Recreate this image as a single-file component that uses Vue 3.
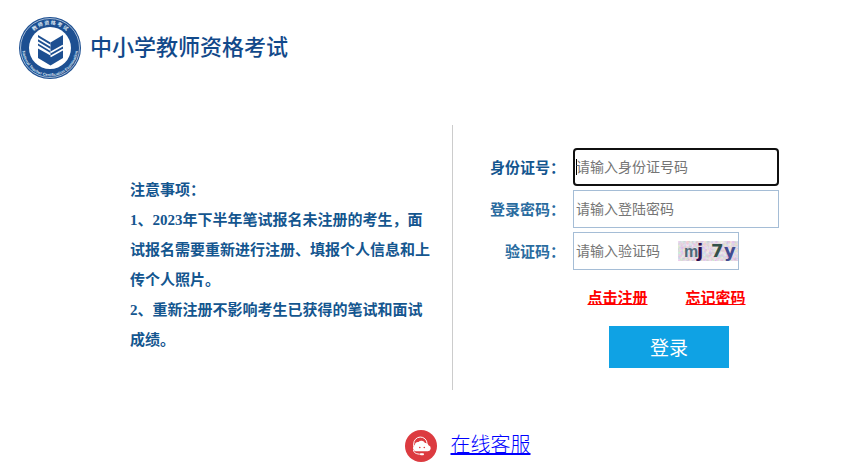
<template>
  <div class="page">
    <header class="header">
      <svg class="header__logo" viewBox="0 0 64 64" role="img" aria-label="教师资格考试">
        <defs>
          <path id="ring-top" d="M8.500 32a23.500 23.500 0 0 1 47 0" />
          <path id="ring-bottom" d="M4.600 27a27.900 27.900 0 1 0 54.800 0" />
        </defs>
        <circle cx="32" cy="32" r="31" fill="#1d4f91" />
        <circle cx="32" cy="32" r="29.500" fill="none" stroke="#dbe5f1" stroke-width="0.700" />
        <circle cx="32" cy="32" r="21" fill="#fff" />
        <text class="header__ring-cn"><textPath href="#ring-top" startOffset="50%" text-anchor="middle">教 师 资 格 考 试</textPath></text>
        <text class="header__ring-en"><textPath href="#ring-bottom" startOffset="50%" text-anchor="middle">National Teacher Certification Examination</textPath></text>
        <g fill="#1d4f91">
          <path d="M20 32.500l12.500 7L45 32.500V42L32.500 49.500 20 42z" />
          <path d="M20 19l12.500 7.500v2.200L20 21.200z" />
          <path d="M20 23.200l12.500 7.500v2.200L20 25.400z" />
          <path d="M20 27.400l12.500 7.500v2.200L20 29.600z" />
          <path d="M45 19v14L32.500 40V26.500z" />
        </g>
        <path d="M32.500 36.500l12.500-7M32.500 40.500l12.500-7" stroke="#fff" stroke-width="1.500" />
      </svg>
      <h1 class="header__title">中小学教师资格考试</h1>
    </header>

    <main class="main">
      <section class="notice">
        <p>注意事项：</p>
        <p v-for="(item, i) in notices" :key="i">{{ i + 1 }}、{{ item }}</p>
      </section>

      <form class="login" @submit.prevent>
        <div class="login__fields">
          <label class="login__label" for="idcard">身份证号：</label>
          <input id="idcard" ref="idInput" v-model="form.id" class="login__input" type="text" placeholder="请输入身份证号码">

          <label class="login__label login__label--soft" for="password">登录密码：</label>
          <input id="password" v-model="form.password" class="login__input" type="password" placeholder="请输入登陆密码">

          <label class="login__label login__label--soft" for="code">验证码：</label>
          <div class="login__code">
            <input id="code" v-model="form.code" class="login__code-input" type="text" placeholder="请输入验证码">
            <svg class="login__captcha" viewBox="0 0 60 20" role="img" aria-label="验证码图片">
              <filter id="grain" x="0" y="0" width="100%" height="100%">
                <feTurbulence type="fractalNoise" baseFrequency="0.35" numOctaves="2" seed="4" />
                <feColorMatrix values="0.6 0 0 0 0.46  0 0.6 0 0 0.38  0 0 0.5 0 0.5  0 0 0 0 1" />
              </filter>
              <rect width="60" height="20" filter="url(#grain)" />
              <g class="login__glyphs">
                <text x="6" y="16" class="login__glyph-wide" fill="#4d6878">m</text>
                <text x="19" y="16" fill="#301050">j</text>
                <text x="33" y="16" fill="#345048">7</text>
                <text x="46" y="16" fill="#424c90">y</text>
              </g>
            </svg>
          </div>
        </div>

        <div class="login__links">
          <a href="#register">点击注册</a>
          <a href="#forgot">忘记密码</a>
        </div>
        <button class="login__submit" type="submit">登录</button>
      </form>
    </main>

    <footer class="service">
      <svg class="service__icon" viewBox="0 0 32 32" aria-hidden="true">
        <circle cx="16" cy="16" r="16" fill="#dc3b40" />
        <path d="M8.700 16v-2a6.700 6.700 0 0 1 13.400-.5" fill="none" stroke="#fff" stroke-width="1" />
        <path d="M10.500 21.200a3.500 3.500 0 0 1-.6-6.500 3.200 3.200 0 0 1 3.600-2.700 4 4 0 0 1 6.500 1 3 3 0 0 1 3.500 2.300 3 3 0 0 1-.6 5.900z" fill="#fff" />
        <path d="M8.500 20c.4 3 2.500 4.200 8 4.200" fill="none" stroke="#fff" stroke-width="1" />
        <rect x="15" y="23.200" width="4" height="2" rx="1" fill="#fff" />
        <circle cx="14.800" cy="17.500" r="0.800" fill="#dc3b40" />
        <circle cx="19.300" cy="17.500" r="0.800" fill="#dc3b40" />
      </svg>
      <a class="service__link" href="#service">在线客服</a>
    </footer>
  </div>
</template>

<script setup>
import { onMounted, reactive, ref } from 'vue'

const notices = [
  '2023年下半年笔试报名未注册的考生，面试报名需要重新进行注册、填报个人信息和上传个人照片。',
  '重新注册不影响考生已获得的笔试和面试成绩。',
]

const form = reactive({ id: '', password: '', code: '' })
const idInput = ref(null)

onMounted(() => {
  idInput.value.focus()
})
</script>

<style scoped>
.page {
  font-family: "Liberation Serif", "Noto Sans CJK SC", sans-serif;
  font-size: 15px;
  color: #14568f;
}

.header {
  display: flex;
  align-items: center;
  gap: 8px;
  padding: 16px 18px 0;
}

.header__logo {
  width: 64px;
  height: 64px;
}

.header__ring-cn {
  font-family: "Noto Sans CJK SC", sans-serif;
  font-size: 5px;
  font-weight: 700;
  fill: #dbe5f1;
}

.header__ring-en {
  font-family: "Liberation Sans", sans-serif;
  font-size: 4px;
  font-weight: 700;
  fill: #dbe5f1;
}

.header__title {
  margin: 0;
  padding-bottom: 6px;
  font-family: "Noto Sans CJK SC", sans-serif;
  font-size: 22px;
  font-weight: 500;
  line-height: 32px;
  color: #12498a;
}

.main {
  display: flex;
  margin-top: 45px;
}

.notice {
  flex: 0 0 453px;
  box-sizing: border-box;
  padding: 50px 22px 35px 130px;
  border-right: 1px solid #ccc;
  font-weight: 700;
  line-height: 30px;
}

.notice p {
  margin: 0;
}

.login {
  padding: 23px 0 0 37px;
}

.login__fields {
  display: grid;
  grid-template-columns: auto 206px;
  align-items: center;
  gap: 4px 8px;
}

.login__label {
  padding-bottom: 2px;
  font-weight: 700;
  text-align: right;
}

.login__label--soft {
  color: #2a6c9f;
}

.login__input,
.login__code {
  box-sizing: border-box;
  height: 38px;
  border: 1px solid #a5bdd6;
  background: #fff;
}

.login__input,
.login__code-input {
  padding: 0 2px 2px;
  font-family: "Noto Sans CJK SC", sans-serif;
  font-size: 14px;
  color: #333;
}

.login__input::placeholder,
.login__code-input::placeholder {
  color: #757575;
}

.login__input:focus {
  padding: 0 1px 2px;
  border: 2px solid #101010;
  border-radius: 4px;
  outline: 0;
  caret-color: #000;
}

/* caret bar of the empty focused field */
.login__input:focus:placeholder-shown {
  background: linear-gradient(#000, #000) 1px 9px / 1px 16px no-repeat #fff;
  caret-color: transparent;
}

.login__code {
  display: flex;
  align-items: center;
  width: 166px;
}

.login__code-input {
  flex: 1;
  min-width: 0;
  border: 0;
  outline: 0;
  background: transparent;
}

.login__captcha {
  flex: none;
  width: 60px;
  height: 20px;
}

.login__glyphs {
  font-family: "DejaVu Sans", sans-serif;
  font-size: 18px;
  font-weight: 700;
}

.login__glyph-wide {
  font-family: "Liberation Sans", sans-serif;
  font-size: 16px;
}

.login__links {
  display: flex;
  justify-content: center;
  gap: 38px;
  margin: 17px 0 16px 64px;
  line-height: 23px;
}

.login__links a {
  font-weight: 700;
  color: #f00;
}

.login__submit {
  display: block;
  width: 120px;
  height: 42px;
  margin-left: 119px;
  padding: 0 0 2px;
  border: 0;
  background: #0fa2e4;
  font-family: "Noto Sans CJK SC", sans-serif;
  font-size: 19px;
  color: #fff;
  cursor: pointer;
}

.service {
  display: flex;
  align-items: center;
  justify-content: center;
  gap: 14px;
  margin-top: 40px;
  padding-left: 84px;
}

.service__icon {
  width: 32px;
  height: 32px;
}

.service__link {
  padding-bottom: 4px;
  font-family: "Noto Sans CJK SC", sans-serif;
  font-size: 20px;
  font-weight: 300;
  line-height: 28px;
  color: #00f;
}
</style>

<style>
body {
  margin: 0;
  background: #fff;
}
</style>
